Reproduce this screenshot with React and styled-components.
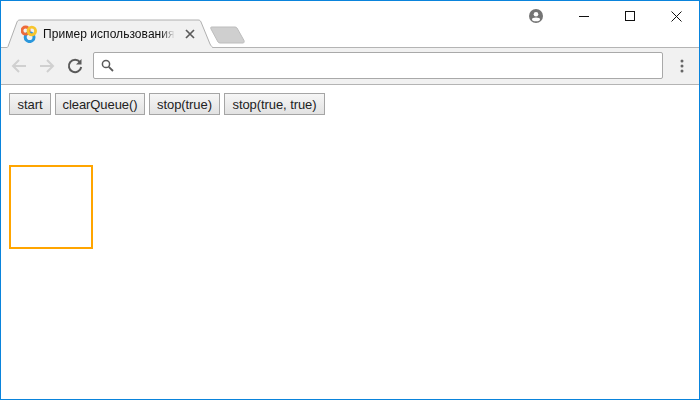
import React from 'react';
import styled, { createGlobalStyle } from 'styled-components';

const Global = createGlobalStyle`
  html, body { margin: 0; padding: 0; background: #fff; }
  #root { width: 700px; height: 400px; }
`;
const Win = styled.div`
  box-sizing: border-box; width: 700px; height: 400px; border: 1px solid #0a84dc;
  display: flex; flex-direction: column; background: #fff; overflow: hidden;
  font-family: "Liberation Sans", Arial, sans-serif;
`;
const TitleBar = styled.div`
  height: 47px; flex: none; position: relative; display: flex; justify-content: space-between;
  align-items: flex-start; box-sizing: border-box; border-bottom: 1px solid #b4b4b4;
`;
const TabStrip = styled.div`
  display: flex; align-items: flex-start; padding: 18px 0 0 6px; height: 47px; box-sizing: border-box;
`;
const Tab = styled.div`
  position: relative; width: 206px; height: 29px; display: flex; align-items: center;
  padding-left: 14px; box-sizing: border-box; gap: 6px; flex: none;
`;
const TabShape = styled.svg`
  position: absolute; left: 0; top: 0; width: 206px; height: 29px;
`;
const Favicon = styled.svg`
  position: relative; width: 16px; height: 18px; flex: none; margin-top: 1px;
`;
const TabTitle = styled.span`
  position: relative; width: 132px; white-space: nowrap; overflow: hidden; font-size: 12px; color: #111;
  line-height: 16px; letter-spacing: 0.05px;
  -webkit-mask-image: linear-gradient(to right, #000 118px, transparent 132px);
  mask-image: linear-gradient(to right, #000 118px, transparent 132px);
`;
const TabClose = styled.svg`
  position: relative; width: 10px; height: 10px; flex: none; margin-left: 4px;
`;
const NewTab = styled.svg`
  width: 35px; height: 18px; flex: none; margin: 7px 0 0 -3px;
`;
const Caption = styled.div`
  display: flex; align-items: center; height: 30px;
`;
const ProfileIcon = styled.svg`
  width: 14px; height: 14px; margin-right: 18px;
`;
const CapBtn = styled.div`
  width: 46px; height: 30px; display: flex; align-items: center; justify-content: center;
`;
const Toolbar = styled.div`
  height: 37px; flex: none; background: #f1f1f1; border-bottom: 1px solid #b4b4b4; box-sizing: border-box;
  display: flex; align-items: center; padding: 0 0 1px 9px;
`;
const NavIcon = styled.svg`
  width: 18px; height: 18px; flex: none; margin-right: ${p => p.$gap}px;
`;
const Omnibox = styled.div`
  width: 570px; height: 27px; box-sizing: border-box; background: #fff; border: 1px solid #a9a9a9;
  border-radius: 2px; display: flex; align-items: center; padding-left: 7px; flex: none;
`;
const Dots = styled.svg`
  width: 4px; height: 14px; margin-left: 17px; flex: none;
`;
const Page = styled.div`
  flex: 1; padding: 8px; display: flex; flex-direction: column; align-items: flex-start;
`;
const Buttons = styled.div`
  display: flex; gap: 4px;
`;
const Btn = styled.button`
  height: 22px; padding: 0; width: ${p => p.$w}px; box-sizing: border-box; border: 1px solid #a5a5a5;
  background: linear-gradient(#f6f6f6, #e2e2e2); font-family: "Liberation Sans", Arial, sans-serif;
  font-size: 13px; letter-spacing: -0.08px; color: #222; border-radius: 0;
`;
const Square = styled.div`
  width: 84px; height: 84px; box-sizing: border-box; border: 2px solid orange; margin-top: 50px;
`;

export default function App() {
  return (
    <Win>
      <Global />
      <TitleBar>
        <TabStrip>
          <Tab>
            <TabShape viewBox="0 0 206 29">
              <path d="M0 29 L1 27.5 L10 3 C10.6 1.5 11.5 1 13 1 L191 1 C192.5 1 193.4 1.5 194 3 L203 25 C204 27 205 28 206 29 Z" fill="#f1f1f1" />
              <path d="M0 28.5 L1 27.5 L10 3 C10.6 1.5 11.5 1 13 1 L191 1 C192.5 1 193.4 1.5 194 3 L203 25 C204 27 205 28 206 28.5" fill="none" stroke="#b0b0b0" />
            </TabShape>
            <Favicon viewBox="0 0 16 18">
              <circle cx="8.6" cy="12.2" r="4.4" fill="none" stroke="#2a97dc" strokeWidth="3" />
              <circle cx="4.6" cy="5.6" r="3.6" fill="none" stroke="#ee6a3a" strokeWidth="2.8" />
              <circle cx="10.8" cy="6" r="3.8" fill="none" stroke="#f7c52e" strokeWidth="2.8" />
            </Favicon>
            <TabTitle>Пример использования</TabTitle>
            <TabClose viewBox="0 0 10 10">
              <path d="M1 1 L9 9 M9 1 L1 9" stroke="#5a5a5a" strokeWidth="1.7" />
            </TabClose>
          </Tab>
          <NewTab viewBox="0 0 35 18">
            <path d="M1.5 1 L25 1 C26 1 26.5 1.5 27 2 L34 14.5 C34.5 16 34 17 33 17 L10 17 C9 17 8.5 16.5 8 16 L1 3 C0.5 2 0.5 1 1.5 1 Z" fill="#cfcfcf" stroke="#bdbdbd" />
          </NewTab>
        </TabStrip>
        <Caption>
          <ProfileIcon viewBox="0 0 14 14">
            <circle cx="7" cy="7" r="7" fill="#757575" />
            <circle cx="7" cy="5.2" r="2.3" fill="#fff" />
            <ellipse cx="7" cy="10.4" rx="4" ry="1.8" fill="#fff" />
          </ProfileIcon>
          <CapBtn>
            <svg width="10" height="10" viewBox="0 0 10 10"><path d="M0 5.5 H10" stroke="#111" strokeWidth="1" /></svg>
          </CapBtn>
          <CapBtn>
            <svg width="10" height="10" viewBox="0 0 10 10"><rect x="0.5" y="0.5" width="9" height="9" fill="none" stroke="#111" /></svg>
          </CapBtn>
          <CapBtn>
            <svg width="11" height="11" viewBox="0 0 11 11"><path d="M0.5 0.5 L10.5 10.5 M10.5 0.5 L0.5 10.5" stroke="#111" strokeWidth="1" /></svg>
          </CapBtn>
        </Caption>
      </TitleBar>
      <Toolbar>
        <NavIcon $gap={10} viewBox="0 0 18 18">
          <path d="M16 9 H3 M9 3 L3 9 L9 15" fill="none" stroke="#d0d0d0" strokeWidth="2" />
        </NavIcon>
        <NavIcon $gap={10} viewBox="0 0 18 18">
          <path d="M2 9 H15 M9 3 L15 9 L9 15" fill="none" stroke="#d0d0d0" strokeWidth="2" />
        </NavIcon>
        <NavIcon $gap={9} viewBox="0 0 18 18">
          <path d="M14 5.2 A6.2 6.2 0 1 0 15.2 10" fill="none" stroke="#5a5a5a" strokeWidth="2" />
          <path d="M15.5 2 V7.5 H10 Z" fill="#5a5a5a" />
        </NavIcon>
        <Omnibox>
          <svg width="13" height="13" viewBox="0 0 13 13">
            <circle cx="5" cy="5" r="3.6" fill="none" stroke="#5a5a5a" strokeWidth="1.5" />
            <path d="M7.8 7.8 L12 12" stroke="#5a5a5a" strokeWidth="1.8" />
          </svg>
        </Omnibox>
        <Dots viewBox="0 0 4 14">
          <circle cx="2" cy="2" r="1.5" fill="#666" />
          <circle cx="2" cy="7" r="1.5" fill="#666" />
          <circle cx="2" cy="12" r="1.5" fill="#666" />
        </Dots>
      </Toolbar>
      <Page>
        <Buttons>
          <Btn $w={42}>start</Btn>
          <Btn $w={90}>clearQueue()</Btn>
          <Btn $w={71}>stop(true)</Btn>
          <Btn $w={101}>stop(true, true)</Btn>
        </Buttons>
        <Square />
      </Page>
    </Win>
  );
}
